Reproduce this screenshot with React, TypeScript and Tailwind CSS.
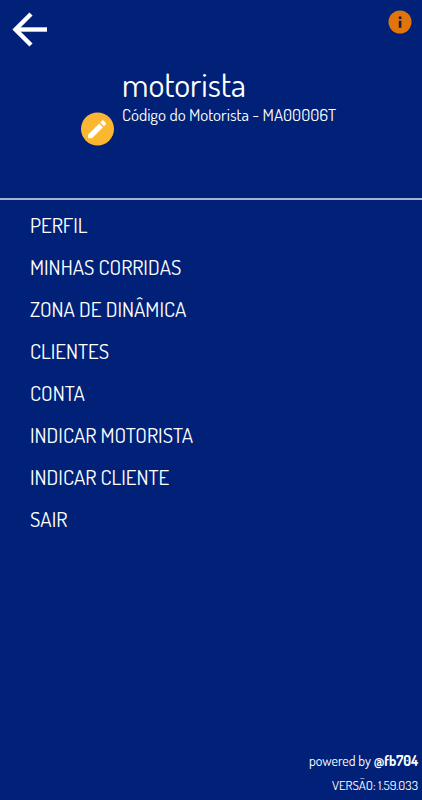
import React from "react";

const menuItems = [
  { label: "PERFIL", href: "#perfil" },
  { label: "MINHAS CORRIDAS", href: "#corridas" },
  { label: "ZONA DE DINÂMICA", href: "#dinamica" },
  { label: "CLIENTES", href: "#clientes" },
  { label: "CONTA", href: "#conta" },
  { label: "INDICAR MOTORISTA", href: "#indicar-motorista" },
  { label: "INDICAR CLIENTE", href: "#indicar-cliente" },
  { label: "SAIR", href: "#sair" },
];

export default function App() {
  return (
    <div className="flex min-h-screen flex-col bg-[#002177] font-['Dosis','Lato',sans-serif] text-white">
      {/* Top bar */}
      <header className="flex items-start justify-between px-2.5 pt-2.5">
        <button type="button" aria-label="Voltar" className="h-10 w-10">
          <svg viewBox="0 0 40 40" className="h-10 w-10" fill="none" stroke="currentColor" strokeWidth="4.400">
            <path d="M21 4 L5.500 19.500 L21 35" />
            <path d="M6 19.500 H37" />
          </svg>
        </button>
        <button type="button" aria-label="Informações" className="h-6 w-6">
          <svg viewBox="0 0 24 24" className="h-6 w-6">
            <circle cx="12" cy="12" r="11.500" fill="#e1740b" />
            <path d="M10.800 6.500h2.600v2.400h-2.600z M10.800 10.700h2.600v7h-2.600z" fill="#1a1a40" />
          </svg>
        </button>
      </header>

      {/* Driver info */}
      <section className="flex h-[150px] items-start border-b-2 border-[#a5b1d5] pr-4 pl-20">
        <button type="button" aria-label="Editar perfil" className="mt-15 h-9 w-9 shrink-0">
          <svg viewBox="0 0 36 36" className="h-9 w-9">
            <circle cx="17.500" cy="19" r="16.500" fill="#fcb731" />
            <g transform="translate(5.200 7.300)" fill="#fff">
              <path d="M3 17.250V21h3.750L17.810 9.940l-3.750-3.750L3 17.250z" />
              <path d="M20.710 7.040a1 1 0 0 0 0-1.410l-2.340-2.340a1 1 0 0 0-1.410 0l-1.830 1.830 3.750 3.750 1.830-1.830z" />
            </g>
          </svg>
        </button>
        <div className="mt-3.5 pl-1.5">
          <h1 className="text-[34px] leading-10 font-normal">motorista</h1>
          <p className="text-[17px] leading-[22px] whitespace-nowrap">Código do Motorista - MA00006T</p>
        </div>
      </section>

      <nav aria-label="Menu" className="pt-1">
        <ul>
          {menuItems.map((item) => (
            <li key={item.href}>
              <a href={item.href} className="flex h-[42px] items-center pl-[30px] text-[21px] font-normal">
                {item.label}
              </a>
            </li>
          ))}
        </ul>
      </nav>

      <footer className="mt-auto pr-1 pb-[3px] text-right">
        <p className="text-sm leading-6">
          powered by <strong className="font-bold">@fb704</strong>
        </p>
        <p className="text-[13px] leading-6">VERSÃO: 1.59.033</p>
      </footer>
    </div>
  );
}
